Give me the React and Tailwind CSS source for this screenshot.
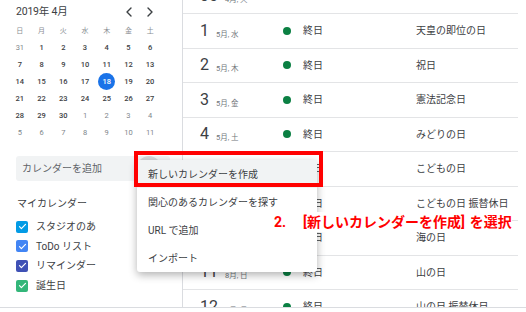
import React from "react";

const FONT = { fontFamily: 'Roboto, "Noto Sans CJK JP", "Noto Sans", sans-serif' };

const weekdays = ["日", "月", "火", "水", "木", "金", "土"];
const weeks = [
  [["31", 1], ["1"], ["2"], ["3"], ["4"], ["5"], ["6"]],
  [["7"], ["8"], ["9"], ["10"], ["11"], ["12"], ["13"]],
  [["14"], ["15"], ["16"], ["17"], ["18", 0, 1], ["19"], ["20"]],
  [["21"], ["22"], ["23"], ["24"], ["25"], ["26"], ["27"]],
  [["28"], ["29"], ["30"], ["1", 1], ["2", 1], ["3", 1], ["4", 1]],
  [["5", 1], ["6", 1], ["7", 1], ["8", 1], ["9", 1], ["10", 1], ["11", 1]],
];

const cals = [
  { name: "スタジオのあ", color: "bg-[#039be5]" },
  { name: "ToDo リスト", color: "bg-[#4285f4]" },
  { name: "リマインダー", color: "bg-[#3f51b5]" },
  { name: "誕生日", color: "bg-[#33b679]" },
];

const events = [
  { n: "30", label: "4月, 火", title: "", hide: true },
  { n: "1", label: "5月, 水", title: "天皇の即位の日" },
  { n: "2", label: "5月, 木", title: "祝日" },
  { n: "3", label: "5月, 金", title: "憲法記念日" },
  { n: "4", label: "5月, 土", title: "みどりの日" },
  { n: "5", label: "5月, 日", title: "こどもの日" },
  { n: "6", label: "5月, 月", title: "こどもの日 振替休日" },
  { n: "15", label: "7月, 月", title: "海の日" },
  { n: "11", label: "8月, 日", title: "山の日" },
  { n: "12", label: "8月, 月", title: "山の日 振替休日" },
];

function Check() {
  return (
    <svg width="9" height="9" viewBox="0 0 24 24" fill="none">
      <path d="M4 12.5l5 5L20 6.5" stroke="white" strokeWidth="3.2" strokeLinecap="round" strokeLinejoin="round" />
    </svg>
  );
}

function Chevron({ dir }) {
  return (
    <svg width="8" height="10" viewBox="0 0 8 10" fill="none">
      <path
        d={dir === "left" ? "M6 1L2 5l4 4" : "M2 1l4 4-4 4"}
        stroke="#3c4043"
        strokeWidth="1.4"
        strokeLinecap="round"
        strokeLinejoin="round"
      />
    </svg>
  );
}

export default function App() {
  return (
    <div className="relative w-[526px] h-[312px] bg-white overflow-hidden" style={FONT}>
      <div className="flex h-[308px] border-b border-[#dadce0] overflow-hidden">
        {/* Sidebar */}
        <div className="w-[183px] shrink-0 border-r border-[#dadce0] flex flex-col">
          <div className="h-[23px] flex items-center pl-[16px] pr-[28px]">
            <span className="text-[10.5px] text-[#3c4043] flex-1 tracking-[-0.2px]">2019年 4月</span>
            <div className="flex items-center gap-[13px]">
              <Chevron dir="left" />
              <Chevron dir="right" />
            </div>
          </div>
          <div className="ml-[9px] w-[152px] grid grid-cols-7 h-[16px] items-center">
            {weekdays.map((w) => (
              <div key={w} className="text-center text-[7px] text-[#8a8e93]">
                {w}
              </div>
            ))}
          </div>
          <div className="ml-[9px] w-[152px] flex flex-col">
            {weeks.map((wk, i) => (
              <div key={i} className="grid grid-cols-7 h-[17px] items-center">
                {wk.map(([d, g, sel], j) => (
                  <div key={j} className="flex justify-center items-center">
                    {sel ? (
                      <div className="w-[17px] h-[17px] rounded-full bg-[#1a73e8] text-white text-[7.5px] font-medium flex items-center justify-center">
                        {d}
                      </div>
                    ) : (
                      <span className={`text-[7.5px] ${g ? "text-[#80868b]" : "text-[#3c4043] font-medium"}`}>{d}</span>
                    )}
                  </div>
                ))}
              </div>
            ))}
          </div>
          <div className="mt-[15px] ml-[16px] mr-[12px] h-[25px] bg-[#f1f3f4] rounded-[3px] flex items-center pl-[6px] relative">
            <span className="text-[10px] text-[#5f6368]">カレンダーを追加</span>
            <div className="absolute left-[121px] top-[0px] w-[24px] h-[24px] rounded-full bg-[#d5d7da]" />
          </div>
          <div className="mt-[14px] h-[16px] flex items-center pl-[17px]">
            <span className="text-[10px] text-[#3c4043]">マイカレンダー</span>
          </div>
          <div className="mt-[6px] flex flex-col">
            {cals.map((c) => (
              <div key={c.name} className="h-[19.6px] flex items-center pl-[16px]">
                <div className={`w-[12px] h-[12px] rounded-[2px] ${c.color} flex items-center justify-center`}>
                  <Check />
                </div>
                <span className="ml-[8px] text-[10px] text-[#3c4043]">{c.name}</span>
              </div>
            ))}
          </div>
        </div>

        {/* Event list */}
        <div className="flex-1 mr-[8px] flex flex-col mt-[-20.5px]">
          {events.map((e, i) => (
            <div key={i} className="h-[34.5px] shrink-0 border-b border-[#e3e4e6] flex items-center">
              <div className="w-[100px] pl-[17px] flex items-baseline">
                <span className="text-[16px] text-[#3c4043] leading-none">{e.n}</span>
                <span className="ml-[7px] text-[7.5px] text-[#70757a] leading-none translate-y-[1px]">{e.label}</span>
              </div>
              {!e.hide && (
                <>
                  <div className="w-[8px] h-[8px] rounded-full bg-[#0b8043]" />
                  <span className="ml-[12px] w-[113px] text-[10px] text-[#3c4043]">終日</span>
                  <span className="text-[10px] text-[#3c4043]">{e.title}</span>
                </>
              )}
            </div>
          ))}
        </div>
      </div>

      {/* Dropdown menu */}
      <div className="absolute left-[137px] top-[160px] w-[180px] bg-white rounded-[3px] shadow-[0_3px_8px_rgba(0,0,0,0.3)] flex flex-col">
        {["新しいカレンダーを作成", "関心のあるカレンダーを探す", "URL で追加", "インポート"].map((t, i) => (
          <div
            key={t}
            className={`h-[28px] flex items-center pl-[11px] text-[10px] text-[#3c4043] ${i === 0 ? "bg-[#f1f3f4]" : ""}`}
          >
            {t}
          </div>
        ))}
      </div>

      {/* Red highlight box */}
      <div className="absolute left-[134px] top-[151px] w-[189px] h-[36px] border-[4px] border-[#ff0000]" />

      {/* Annotation */}
      <div className="absolute left-[274px] top-[212px] h-[20px] flex items-center bg-white text-[14px] font-bold text-[#ff0000] leading-none whitespace-nowrap">
        <span>2.</span>
        <span className="ml-[17px]">[新しいカレンダーを作成]</span>
        <span className="ml-[5px]">を選択</span>
      </div>
    </div>
  );
}
